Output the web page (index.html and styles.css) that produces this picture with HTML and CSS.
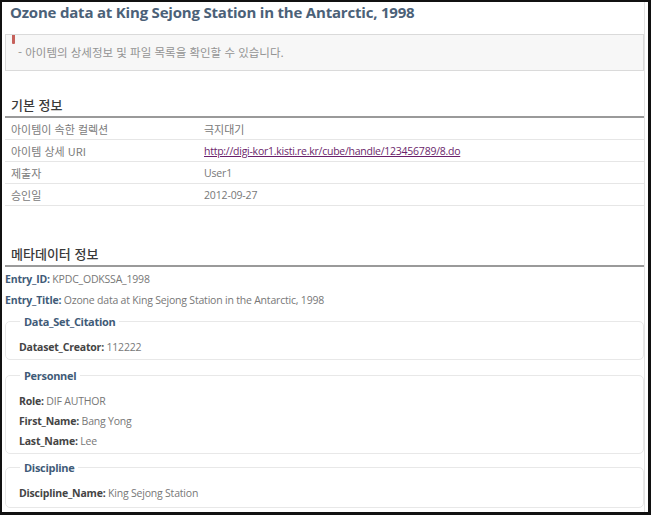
FILE: index.html
```html
<!DOCTYPE html>
<html lang="ko">
<head>
<meta charset="utf-8">
<title>Ozone data</title>
<link rel="stylesheet" href="styles.css">
</head>
<body>
<div class="frame">
  <div class="panel">
    <h1 class="title">Ozone data at King Sejong Station in the Antarctic, 1998</h1>
    <div class="notice">
      <span class="marker"></span>
      <p class="notice-text">- 아이템의 상세정보 및 파일 목록을 확인할 수 있습니다.</p>
    </div>

    <h2 class="section-title basic">기본 정보</h2>
    <table class="info">
      <tr><td class="k">아이템이 속한 컬렉션</td><td class="v kr">극지대기</td></tr>
      <tr><td class="k">아이템 상세 URI</td><td class="v"><a class="link" href="#">http://digi-kor1.kisti.re.kr/cube/handle/123456789/8.do</a></td></tr>
      <tr><td class="k">제출자</td><td class="v">User1</td></tr>
      <tr><td class="k">승인일</td><td class="v">2012-09-27</td></tr>
    </table>

    <h2 class="section-title meta">메타데이터 정보</h2>
    <div class="meta-body">
      <p class="field top"><b>Entry_ID:</b> KPDC_ODKSSA_1998</p>
      <p class="field top"><b>Entry_Title:</b> Ozone data at King Sejong Station in the Antarctic, 1998</p>
      <fieldset class="group first">
        <legend>Data_Set_Citation</legend>
        <p class="field"><b>Dataset_Creator:</b> 112222</p>
      </fieldset>
      <fieldset class="group">
        <legend>Personnel</legend>
        <p class="field"><b>Role:</b> DIF AUTHOR</p>
        <p class="field"><b>First_Name:</b> Bang Yong</p>
        <p class="field"><b>Last_Name:</b> Lee</p>
      </fieldset>
      <fieldset class="group last">
        <legend>Discipline</legend>
        <p class="field"><b>Discipline_Name:</b> King Sejong Station</p>
      </fieldset>
    </div>
  </div>
</div>
</body>
</html>
```
FILE: styles.css
```css
html, body { margin: 0; padding: 0; background: #fff; }
.frame {
  width: 651px; height: 515px; box-sizing: border-box;
  border-style: solid; border-color: #111;
  border-width: 2px 3px 3px 2px;
  overflow: hidden;
  font-family: "Open Sans", "Noto Sans CJK KR", sans-serif;
  color: #666;
}
.panel {
  margin: 0 3px 0 3px;
  border-right: 1px solid #e3e3e3;
  height: 100%;
}
.title {
  margin: 0; padding: 0 0 0 5px;
  font-size: 15px; line-height: 20px; font-weight: 700; color: #4b6178;
  height: 32px; box-sizing: border-box;
  letter-spacing: -0.2px;
}
.notice {
  position: relative;
  background: #f7f7f7;
  border: 1px solid #dadada;
  height: 37px; box-sizing: border-box;
}
.marker {
  position: absolute; left: 6px; top: 0;
  width: 3px; height: 9px; background: #c6615b;
  border-radius: 0 0 1px 1px;
}
.notice-text {
  margin: 0; padding: 9px 0 0 12px;
  font-size: 11.5px; line-height: 16px; color: #939393; font-weight: 400;
  font-family: "Noto Sans CJK KR", sans-serif;
}
.section-title {
  margin: 0; padding: 0 0 3px 6px;
  font-size: 13px; font-weight: 500; color: #3a3a3a;
  font-family: "Noto Sans CJK KR", sans-serif;
  border-bottom: 2px solid #9a9a9a;
  line-height: 16px;
}
.basic { margin-top: 26px; }
.meta { margin-top: 40px; }
.info { width: 100%; border-collapse: collapse; }
.info td {
  height: 21px; padding: 0 0 0 6px;
  border-bottom: 1px solid #e6e6e6;
  color: #777;
}
.info td.k { width: 187px; font-size: 11px; font-family: "Noto Sans CJK KR", sans-serif; color: #7a7a7a; }
.info td.v { font-size: 10.5px; letter-spacing: -0.15px; }
.info td.kr { font-family: "Noto Sans CJK KR", sans-serif; font-size: 11px; letter-spacing: 0; }
.link { color: #6b1f6b; text-decoration: underline; letter-spacing: -0.25px; }
.meta-body { padding-top: 2px; }
.field {
  margin: 0; font-size: 10.5px; line-height: 20px; color: #777;
  letter-spacing: -0.2px;
}
.field.top { line-height: 21px; }
.field b { color: #444; font-weight: 700; }
.meta-body > .field b { color: #3f5b78; }
.group {
  margin: 0 0 6px 0; padding: 8px 13px 2px 13px;
  border: 1px solid #e8e8e8; border-radius: 5px;
}
.group.first { margin-top: 3px; margin-bottom: 8px; }
.group.last { padding-bottom: 4px; }
.group legend {
  padding: 0 4px; margin-left: 1px;
  font-size: 11px; line-height: 15px; font-weight: 700; color: #3f5b78;
  letter-spacing: -0.3px;
}
```
